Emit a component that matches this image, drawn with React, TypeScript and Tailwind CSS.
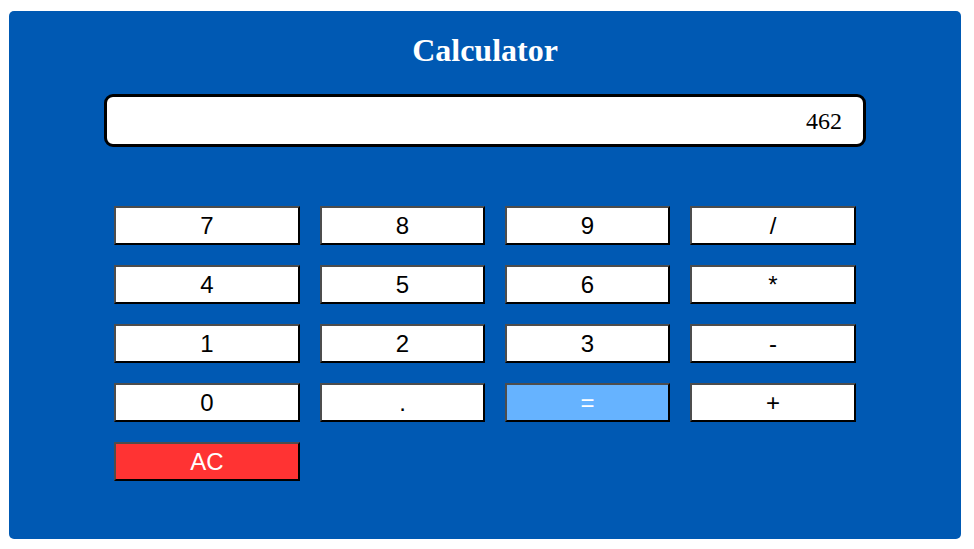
const keys = [
  { label: "7" },
  { label: "8" },
  { label: "9" },
  { label: "/" },
  { label: "4" },
  { label: "5" },
  { label: "6" },
  { label: "*" },
  { label: "1" },
  { label: "2" },
  { label: "3" },
  { label: "-" },
  { label: "0" },
  { label: "." },
  { label: "=", tone: "equals" },
  { label: "+" },
  { label: "AC", tone: "clear" },
];

function Key({ label, tone }: { label: string; tone?: string }) {
  const color =
    tone === "equals"
      ? "bg-[#66b3ff] text-white"
      : tone === "clear"
        ? "bg-[#ff3333] text-white"
        : "bg-white text-black";
  return (
    <button
      className={`${color} h-[39px] border-2 border-t-[#4d4d4d] border-l-[#4d4d4d] border-r-black border-b-black font-['Liberation_Sans',Arial,sans-serif] text-[24px] leading-none flex items-center justify-center`}
    >
      {label}
    </button>
  );
}

export default function App() {
  return (
    <div className="w-[974px] h-[549px] bg-white pt-[11px] pl-[9px]">
      <div className="w-[952px] h-[528px] bg-[#0059b3] rounded-[5px] flex flex-col items-center pt-[21px]">
        <h1 className="font-['Liberation_Serif','Times_New_Roman',serif] font-bold text-[32px] leading-[36px] text-white">
          Calculator
        </h1>
        <div className="mt-[26px] w-[762px] h-[53px] bg-white border-[3px] border-black rounded-[9px] flex items-center justify-end pr-[21px] font-['Liberation_Serif','Times_New_Roman',serif] text-[24px] text-black">
          462
        </div>
        <div className="mt-[59px] grid grid-cols-[186px_165px_165px_166px] gap-x-5 gap-y-5">
          {keys.map((k) => (
            <Key key={k.label} label={k.label} tone={k.tone} />
          ))}
        </div>
      </div>
    </div>
  );
}
